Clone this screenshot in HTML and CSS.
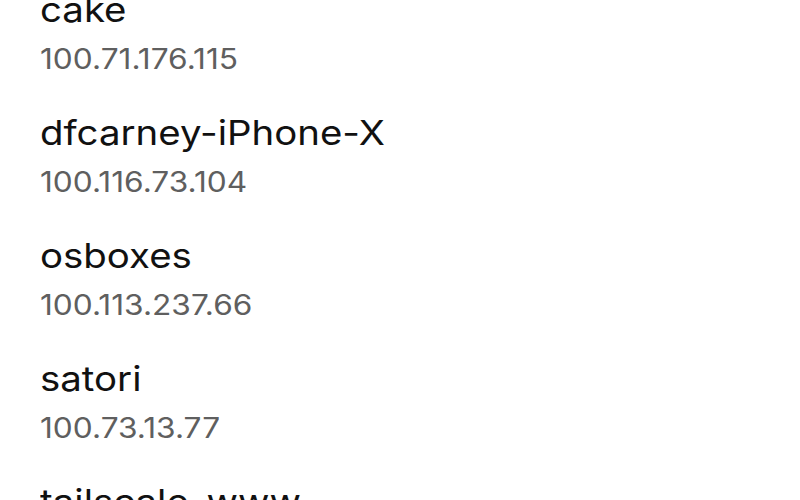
FILE: index.html
```html
<!DOCTYPE html>
<html lang="en">
<head>
  <meta charset="UTF-8">
  <title>Devices</title>
  <link rel="stylesheet" href="styles.css">
</head>
<body>
  <ul class="device-list">
    <li class="device">
      <div class="device-name">cake</div>
      <div class="device-ip">100.71.176.115</div>
    </li>
    <li class="device">
      <div class="device-name">dfcarney-iPhone-X</div>
      <div class="device-ip">100.116.73.104</div>
    </li>
    <li class="device">
      <div class="device-name">osboxes</div>
      <div class="device-ip">100.113.237.66</div>
    </li>
    <li class="device">
      <div class="device-name">satori</div>
      <div class="device-ip">100.73.13.77</div>
    </li>
    <li class="device">
      <div class="device-name">tailscale-www</div>
      <div class="device-ip">100.101.102.103</div>
    </li>
  </ul>
</body>
</html>
```

FILE: styles.css
```css
body {
  margin: 0;
  background: #fff;
  font-family: Inter, "Noto Sans", sans-serif;
  overflow: hidden;
}
.device-list {
  list-style: none;
  width: 600px;
  margin: -28px 0 0 40px;
  padding: 0;
  transform: scaleX(1.13);
  transform-origin: left top;
}
.device {
  padding: 18px 0 19px;
}
.device-name {
  font-size: 34px;
  line-height: 40px;
  color: #111;
}
.device-ip {
  font-size: 28px;
  line-height: 34px;
  margin-top: 12px;
  color: #5f5f5f;
}
```
